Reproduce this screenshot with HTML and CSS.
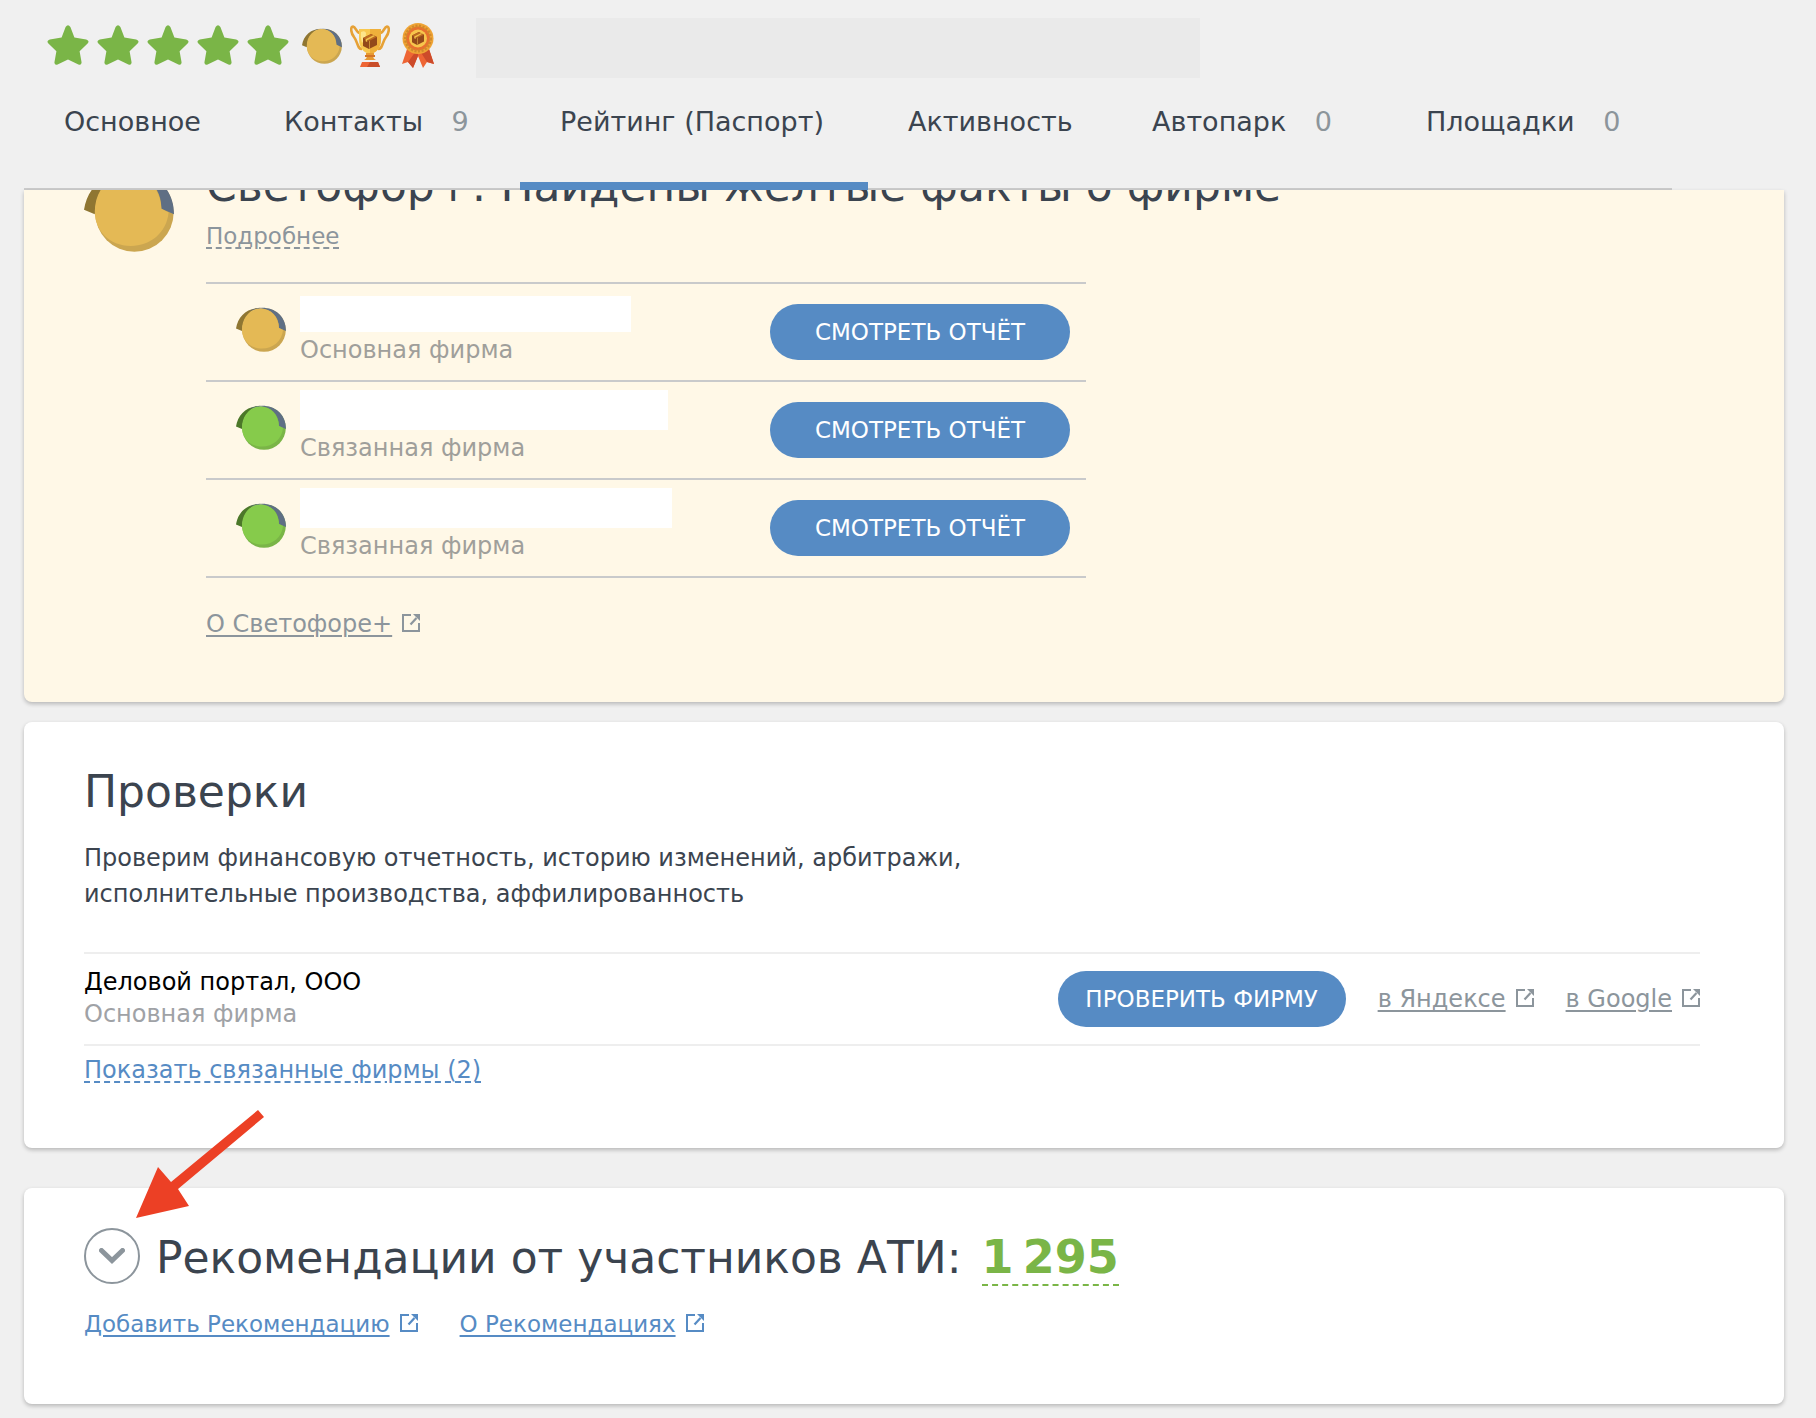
FILE: index.html
```html
<!DOCTYPE html>
<html lang="ru">
<head>
<meta charset="utf-8">
<meta name="viewport" content="width=device-width, initial-scale=1">
<title>Паспорт фирмы</title>
<link rel="stylesheet" href="styles.css">
</head>
<body>
<svg class="sprite" aria-hidden="true">
  <symbol id="star" viewBox="0 0 42 40">
    <path d="M18.6 1.9Q21 -1.2 23.4 1.9L27.4 12.6L39.2 14.4Q43 15.6 40.6 18.6L32.6 26.2L34.6 37.4Q34.4 40.6 31.4 39.6L21 34.6L10.6 39.6Q7.6 40.6 7.4 37.4L9.4 26.2L1.4 18.6Q-1 15.6 2.8 14.4L14.6 12.6Z"/>
  </symbol>
  <symbol id="light" viewBox="0 0 50 45">
    <circle class="light-shade" cx="28" cy="23" r="21.8"/>
    <path class="light-back" d="M0 21.5C2 9 11 .8 25 .8C15 2 7 10 6 24Z"/>
    <path class="light-visor" d="M13 3.8C30 -4 50 4 50 24L43 21C43 9 35 2 25 1.4Z"/>
    <path class="light-face" d="M24.5 1.4C35 1.4 42.6 10 43 21L47 23C46 34 37 41.6 26 41.6C14 41.6 6 33 6 22.5C6 11 14 1.4 24.5 1.4Z"/>
  </symbol>
  <symbol id="external" viewBox="0 0 18 18">
    <path d="M9 1H1V17H17V9" fill="none" stroke="currentColor" stroke-width="2"/>
    <path d="M8.5 10.5L14.5 4" fill="none" stroke="currentColor" stroke-width="2.2"/>
    <path d="M11 0H18V7Z" fill="currentColor"/>
  </symbol>
  <symbol id="box" viewBox="0 0 14 15">
    <path fill="#93491a" d="M0 4L8 0L14 3L14 11L6 15L0 12Z"/>
    <path fill="#bd6a21" d="M0 4L8 0L14 3L6 7Z"/>
    <path fill="#f2c14a" d="M2.6 5.3L10.4 1.3L12 2.1L4.2 6.2V8L2.6 7.2ZM6 7H6.6V14.5H6Z"/>
  </symbol>
</svg>

<header class="top">
  <div class="summary">
    <div class="stars" role="img" aria-label="Рейтинг: 5 из 5">
      <svg class="star"><use href="#star"/></svg>
      <svg class="star"><use href="#star"/></svg>
      <svg class="star"><use href="#star"/></svg>
      <svg class="star"><use href="#star"/></svg>
      <svg class="star"><use href="#star"/></svg>
    </div>
    <div class="awards">
      <svg class="light light-mini yellow" aria-hidden="true"><use href="#light"/></svg>
      <svg class="trophy" viewBox="0 0 40 42" aria-hidden="true">
        <g fill="none" stroke="#e6a136" stroke-width="2.6">
          <path d="M10 8C6 8 6 2 3 1.5C0 2 1 8 4 12C8 17 7 24 12 24"/>
          <path d="M30 8C34 8 34 2 37 1.5C40 2 39 8 36 12C32 17 33 24 28 24"/>
        </g>
        <path fill="#f8c84f" d="M9 4H31V14C31 23 26 28 20 29C14 28 9 23 9 14Z"/>
        <path fill="#efb03b" d="M20 4H31V14C31 23 26 28 20 29Z"/>
        <path fill="#fde58b" d="M11 7Q15 5 16 8Q16 14 12 18Q10 12 11 7Z"/>
        <path fill="#e79a32" d="M16 28H24V30H23Q23 34 26 35H14Q17 34 17 30H16Z"/>
        <path fill="#d47528" d="M15 30H25V32H15Z"/>
        <path fill="#ee6534" d="M12 37H28L30 42H10Z"/>
        <path fill="#c94d28" d="M20 37H28L30 42H17Z"/>
        <use href="#box" x="13" y="9" width="14" height="15"/>
      </svg>
      <svg class="medal" viewBox="0 0 32 46" aria-hidden="true">
        <path fill="#ee6534" d="M5 26L0 41L6 39L11 45L16 33L21 45L25 39L32 41L27 26Z"/>
        <path fill="#cd4b2a" d="M6 39L14 28H16V33L11 45ZM18 28L27 26L32 41L25 39Z"/>
        <circle cx="16" cy="15.500" r="15.500" fill="#efa435"/>
        <circle cx="16" cy="15.500" r="12" fill="#e8702f"/>
        <circle cx="16" cy="15.500" r="12.500" fill="none" stroke="#d18a2c" stroke-width="3" stroke-dasharray="2 1.500"/>
        <circle cx="16" cy="15.500" r="9" fill="#f7c54c"/>
        <use href="#box" x="10" y="9" width="12" height="13"/>
      </svg>
    </div>
    <div class="firm-name"></div>
  </div>
  <nav class="tabs">
    <a class="tab" href="#">Основное</a>
    <a class="tab" href="#">Контакты <span class="count">9</span></a>
    <a class="tab active" href="#" aria-current="page">Рейтинг (Паспорт)</a>
    <a class="tab" href="#">Активность</a>
    <a class="tab" href="#">Автопарк <span class="count">0</span></a>
    <a class="tab" href="#">Площадки <span class="count">0</span></a>
  </nav>
</header>

<main class="content">
  <section class="card traffic">
    <svg class="light light-big yellow" aria-hidden="true"><use href="#light"/></svg>
    <div class="traffic-body">
      <h2 class="title">Светофор+: Найдены жёлтые факты о фирме</h2>
      <a class="link muted dashed" href="#">Подробнее</a>
      <ul class="reports">
        <li class="report">
          <svg class="light yellow" aria-hidden="true"><use href="#light"/></svg>
          <div class="report-firm"><span class="mask mask-a"></span><span class="note">Основная фирма</span></div>
          <button class="btn btn-report" type="button">СМОТРЕТЬ ОТЧЁТ</button>
        </li>
        <li class="report">
          <svg class="light green" aria-hidden="true"><use href="#light"/></svg>
          <div class="report-firm"><span class="mask mask-b"></span><span class="note">Связанная фирма</span></div>
          <button class="btn btn-report" type="button">СМОТРЕТЬ ОТЧЁТ</button>
        </li>
        <li class="report">
          <svg class="light green" aria-hidden="true"><use href="#light"/></svg>
          <div class="report-firm"><span class="mask mask-c"></span><span class="note">Связанная фирма</span></div>
          <button class="btn btn-report" type="button">СМОТРЕТЬ ОТЧЁТ</button>
        </li>
      </ul>
      <a class="ext large muted" href="#"><span class="link">О Светофоре+</span><svg class="ext-icon" aria-hidden="true"><use href="#external"/></svg></a>
    </div>
  </section>

  <section class="card checks">
    <h2 class="title">Проверки</h2>
    <p class="lead">Проверим финансовую отчетность, историю изменений, арбитражи, исполнительные производства, аффилированность</p>
    <div class="check-row">
      <div class="check-firm">
        <div class="check-name">Деловой портал, ООО</div>
        <div class="note">Основная фирма</div>
      </div>
      <div class="check-actions">
        <button class="btn btn-check" type="button">ПРОВЕРИТЬ ФИРМУ</button>
        <a class="ext large muted" href="#"><span class="link">в Яндексе</span><svg class="ext-icon" aria-hidden="true"><use href="#external"/></svg></a>
        <a class="ext large muted" href="#"><span class="link">в Google</span><svg class="ext-icon" aria-hidden="true"><use href="#external"/></svg></a>
      </div>
    </div>
    <a class="link large blue dashed" href="#">Показать связанные фирмы (2)</a>
  </section>

  <section class="card recs">
    <div class="recs-head">
      <button class="toggle" type="button" aria-label="Развернуть">
        <svg class="chevron" viewBox="0 0 26 16" aria-hidden="true"><path d="M2.500 2.500L13 12.500L23.500 2.500"/></svg>
      </button>
      <h2 class="title">Рекомендации от участников АТИ:</h2>
      <a class="total" href="#">1&#8201;295</a>
    </div>
    <div class="recs-links">
      <a class="ext blue" href="#"><span class="link">Добавить Рекомендацию</span><svg class="ext-icon" aria-hidden="true"><use href="#external"/></svg></a>
      <a class="ext blue" href="#"><span class="link">О Рекомендациях</span><svg class="ext-icon" aria-hidden="true"><use href="#external"/></svg></a>
    </div>
    <svg class="pointer" viewBox="0 0 128 108" aria-hidden="true"><path fill="#ec4025" d="M0 108L22 57L35 72L122 0L128 7L42 79L53 96Z"/></svg>
  </section>
</main>
</body>
</html>
```

FILE: styles.css
```css
* { box-sizing: border-box; }

body {
  margin: 0;
  background: #f0f0f0;
  color: #3b444f;
  font-family: "DejaVu Sans", Verdana, sans-serif;
  font-size: 23px;
  line-height: 36px;
}

a { color: inherit; text-decoration: none; }

.sprite { position: absolute; width: 0; height: 0; }

/* Header */
.top { padding: 18px 24px 0; }

.summary {
  display: flex;
  align-items: center;
  height: 60px;
  padding-left: 23px;
}

.stars { display: flex; gap: 8px; margin-bottom: 6px; fill: #7ab547; }
.star { width: 42px; height: 40px; }

.awards { display: flex; align-items: center; gap: 8px; margin: 0 0 4px 13px; }
.trophy { width: 40px; height: 42px; }
.medal { width: 32px; height: 46px; margin-left: 4px; }

.firm-name {
  width: 724px;
  height: 60px;
  margin-left: 42px;
  background: #eaeaea;
}

.tabs {
  display: grid;
  grid-template-columns: 220fr 276fr 348fr 244fr 274fr 286fr;
  height: 112px;
  margin-right: 120px;
  border-bottom: 2px solid #ccc;
  font-size: 27px;
  line-height: 36px;
}

.tab { height: 112px; padding: 26px 0 0 40px; white-space: nowrap; }
.tab.active { border-bottom: 8px solid #568bc4; }
.count { margin-left: 20px; color: #8c959b; }

/* Traffic light icon */
.light { width: 50px; height: 45px; flex: none; }
.light-mini { width: 40px; height: 36px; }
.light-big { width: 90px; height: 81px; }
.light-visor { fill: #5f6f84; }
.yellow { --face: #e4b955; --shade: #cba650; --back: #8f7632; }
.green { --face: #86cb4b; --shade: #7ab547; --back: #4c7829; }
.light-face { fill: var(--face); }
.light-shade { fill: var(--shade); }
.light-back { fill: var(--back); }

/* Cards */
.content { padding: 0 32px 14px 24px; }

.card {
  border-radius: 8px;
  background: #fff;
  box-shadow: 0 2px 4px rgba(0, 0, 0, .24);
}

.title { margin: 0; font-size: 44px; font-weight: 400; line-height: 56px; }
.note { color: #9fa2a6; font-size: 24px; line-height: 32px; }
.large { font-size: 24px; }
.muted { color: #8c959c; }
.blue { color: #568bc4; }

.link {
  text-decoration: underline;
  text-decoration-thickness: 2px;
  text-underline-offset: 3px;
}

.link.dashed { text-decoration-style: dashed; }

.ext { display: inline-flex; align-items: center; gap: 10px; }
.ext-icon { width: 18px; height: 18px; margin-bottom: 2px; }

.btn {
  height: 56px;
  padding: 0;
  border: 0;
  border-radius: 28px;
  background: #568bc4;
  color: #fff;
  font: inherit;
}

.btn-report { width: 300px; }
.btn-check { width: 288px; }

.traffic {
  display: flex;
  gap: 32px;
  height: 512px;
  padding-left: 60px;
  overflow: clip;
  border-radius: 0 0 8px 8px;
  background: #fff8e7;
}

.traffic .light-big { margin-top: -19px; }
.traffic-body { width: 880px; margin-top: -32px; }
.traffic .title { white-space: nowrap; }
.traffic .dashed { display: block; width: max-content; margin-top: 4px; }
.traffic .note { color: #9f9f9b; }

.reports {
  margin: 28px 0;
  padding: 0;
  border-top: 2px solid #c9cacb;
  list-style: none;
}

.report {
  display: flex;
  align-items: center;
  height: 98px;
  padding: 0 16px 0 30px;
  border-bottom: 2px solid #c9cacb;
}

.report .light { margin-bottom: 6px; }

.report-firm {
  display: flex;
  flex: 1;
  flex-direction: column;
  justify-content: flex-end;
  align-self: stretch;
  gap: 2px;
  padding: 0 0 14px 14px;
}

.mask { height: 40px; background: #fff; }
.mask-a { width: 331px; height: 36px; }
.mask-b { width: 368px; }
.mask-c { width: 372px; }

/* Checks */
.checks { margin-top: 20px; padding: 42px 84px 60px 60px; }
.checks .lead { max-width: 900px; margin: 20px 0 40px; font-size: 24px; }

.check-row {
  display: flex;
  justify-content: space-between;
  align-items: center;
  height: 94px;
  margin-bottom: 6px;
  border: solid #eee;
  border-width: 2px 0;
}

.check-name { color: #000; font-size: 24px; line-height: 32px; }
.check-firm { padding-bottom: 2px; }
.check-actions { display: flex; align-items: center; gap: 32px; }

/* Recommendations */
.recs { position: relative; margin-top: 40px; padding: 40px 60px 62px; }
.recs-head { display: flex; align-items: center; gap: 16px; height: 60px; }

.toggle {
  display: grid;
  place-items: center;
  width: 56px;
  height: 56px;
  margin-bottom: 4px;
  padding: 0;
  border: 2px solid #8c959c;
  border-radius: 50%;
  background: none;
}

.chevron {
  width: 26px;
  height: 16px;
  fill: none;
  stroke: #8c959c;
  stroke-width: 5;
  stroke-linecap: round;
}

.total {
  margin-left: 4px;
  border-bottom: 2px dashed #7ab547;
  color: #7ab547;
  font-size: 46px;
  font-weight: 700;
  line-height: 54px;
}

.recs-links { display: flex; gap: 42px; margin-top: 18px; }
.pointer { position: absolute; top: -78px; left: 112px; width: 128px; height: 108px; }
```
